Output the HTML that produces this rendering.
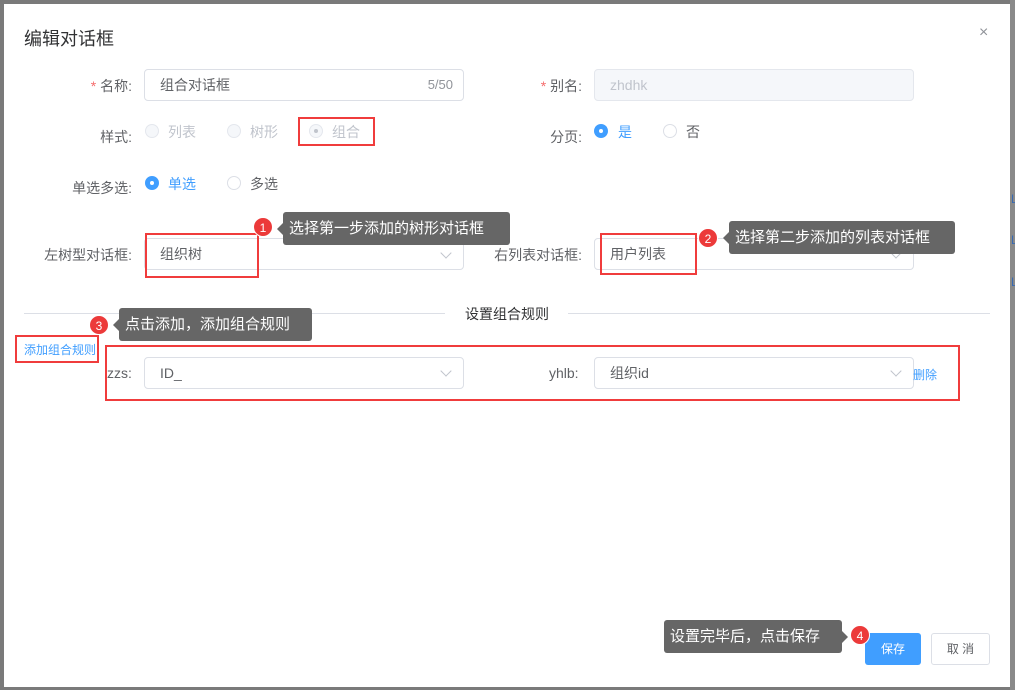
<!DOCTYPE html>
<html><head><meta charset="utf-8"><style>
*{box-sizing:border-box;margin:0;padding:0}
body{width:1015px;height:690px;background:#7a7a7a;position:relative;overflow:hidden;font-family:"Liberation Sans","Noto Sans CJK SC",sans-serif;font-size:14px;color:#606266}
.a{position:absolute;white-space:nowrap}
.modal{position:absolute;left:4px;top:4px;width:1006px;height:683px;background:#fff}
.strip{position:absolute;left:1010px;top:0;width:5px;height:690px;background:#8a8a8a}
.inp{position:absolute;height:32px;border:1px solid #dcdfe6;border-radius:4px;background:#fff;padding-left:15px;line-height:30px;color:#606266;font-size:14px}
.lbl{position:absolute;text-align:right;width:130px;font-size:14px;color:#606266}
.star{color:#f56c6c}
.r{position:absolute;width:14px;height:14px;border:1px solid #dcdfe6;border-radius:50%;background:#fff}
.r.dis{background:#f5f7fa;border-color:#e4e7ed}
.r.on{background:#409eff;border-color:#409eff}
.r.on::after{content:"";position:absolute;left:4px;top:4px;width:4px;height:4px;border-radius:50%;background:#fff}
.r.dison::after{content:"";position:absolute;left:4px;top:4px;width:4px;height:4px;border-radius:50%;background:#c0c4cc}
.box{position:absolute;border:2px solid #f03c3c}
.tip{position:absolute;background:#666;color:#fff;font-size:15px;border-radius:3px;height:33px;line-height:33px;padding-left:6px}
.tip::before{content:"";position:absolute;left:-6px;top:11px;border-right:6px solid #666;border-top:6px solid transparent;border-bottom:6px solid transparent}
.tip.rt::before{left:auto;right:-6px;border-right:none;border-left:6px solid #666}
.badge{position:absolute;width:20px;height:20px;border-radius:50%;background:#ec3a3a;color:#fff;font-size:12px;text-align:center;line-height:20px;border:1px solid #fff}
.arrow{position:absolute;width:8px;height:8px;border-right:1px solid #c0c4cc;border-bottom:1px solid #c0c4cc;transform:rotate(45deg)}
</style></head><body>
<div class="strip"></div>
<div class="a" style="left:1011px;top:192px;color:#3a6ab0;font-size:12px">L</div>
<div class="a" style="left:1011px;top:233px;color:#3a6ab0;font-size:12px">L</div>
<div class="a" style="left:1011px;top:275px;color:#3a6ab0;font-size:12px">L</div>
<div class="modal"></div>
<div class="a" style="left:24px;top:25px;font-size:18px;color:#303133">编辑对话框</div>
<div class="a" style="left:979px;top:24px;font-size:16px;color:#909399">×</div>

<div class="lbl" style="left:2px;top:76px"><span class="star">*</span> 名称:</div>
<div class="inp" style="left:144px;top:69px;width:320px">组合对话框<span style="position:absolute;right:10px;color:#909399;font-size:13px">5/50</span></div>
<div class="lbl" style="left:452px;top:76px"><span class="star">*</span> 别名:</div>
<div class="inp" style="left:594px;top:69px;width:320px;background:#f5f7fa;border-color:#e4e7ed;color:#c0c4cc">zhdhk</div>

<div class="lbl" style="left:2px;top:127px">样式:</div>
<div class="r dis" style="left:145px;top:124px"></div><div class="a" style="left:168px;top:122px;color:#c0c4cc">列表</div>
<div class="r dis" style="left:227px;top:124px"></div><div class="a" style="left:250px;top:122px;color:#c0c4cc">树形</div>
<div class="r dis dison" style="left:309px;top:124px"></div><div class="a" style="left:332px;top:122px;color:#c0c4cc">组合</div>
<div class="box" style="left:298px;top:117px;width:77px;height:29px"></div>
<div class="lbl" style="left:452px;top:127px">分页:</div>
<div class="r on" style="left:594px;top:124px"></div><div class="a" style="left:618px;top:122px;color:#409eff">是</div>
<div class="r" style="left:663px;top:124px"></div><div class="a" style="left:686px;top:122px">否</div>

<div class="lbl" style="left:2px;top:178px">单选多选:</div>
<div class="r on" style="left:145px;top:176px"></div><div class="a" style="left:168px;top:174px;color:#409eff">单选</div>
<div class="r" style="left:227px;top:176px"></div><div class="a" style="left:250px;top:174px">多选</div>

<div class="lbl" style="left:2px;top:245px">左树型对话框:</div>
<div class="inp" style="left:144px;top:238px;width:320px">组织树</div><div class="arrow" style="left:442px;top:249px"></div>
<div class="lbl" style="left:452px;top:245px">右列表对话框:</div>
<div class="inp" style="left:594px;top:238px;width:320px">用户列表</div><div class="arrow" style="left:892px;top:249px"></div>
<div class="box" style="left:145px;top:233px;width:114px;height:45px"></div>
<div class="box" style="left:600px;top:233px;width:97px;height:42px"></div>
<div class="tip" style="left:283px;top:212px;width:227px">选择第一步添加的树形对话框</div>
<div class="badge" style="left:253px;top:217px">1</div>
<div class="tip" style="left:729px;top:221px;width:226px">选择第二步添加的列表对话框</div>
<div class="badge" style="left:698px;top:228px">2</div>

<div class="a" style="left:24px;top:313px;width:421px;height:1px;background:#dcdfe6"></div>
<div class="a" style="left:568px;top:313px;width:422px;height:1px;background:#dcdfe6"></div>
<div class="a" style="left:465px;top:304px;color:#303133;font-size:14px">设置组合规则</div>

<div class="tip" style="left:119px;top:308px;width:193px">点击添加，添加组合规则</div>
<div class="badge" style="left:89px;top:315px">3</div>
<div class="a" style="left:24px;top:341px;color:#409eff;font-size:12px">添加组合规则</div>
<div class="box" style="left:15px;top:335px;width:84px;height:28px"></div>

<div class="a" style="left:107px;top:365px">zzs:</div>
<div class="inp" style="left:144px;top:357px;width:320px">ID_</div><div class="arrow" style="left:442px;top:367px"></div>
<div class="a" style="left:549px;top:365px">yhlb:</div>
<div class="inp" style="left:594px;top:357px;width:320px">组织id</div><div class="arrow" style="left:892px;top:367px"></div>
<div class="a" style="left:913px;top:366px;color:#409eff;font-size:12px">删除</div>
<div class="box" style="left:105px;top:345px;width:855px;height:56px"></div>

<div class="a" style="left:865px;top:633px;width:56px;height:32px;background:#409eff;border-radius:3px;color:#fff;font-size:12px;text-align:center;line-height:32px">保存</div>
<div class="a" style="left:931px;top:633px;width:59px;height:32px;border:1px solid #dcdfe6;border-radius:3px;color:#606266;font-size:12px;text-align:center;line-height:30px">取 消</div>
<div class="tip rt" style="left:664px;top:620px;width:178px">设置完毕后，点击保存</div>
<div class="badge" style="left:850px;top:625px">4</div>
</body></html>
